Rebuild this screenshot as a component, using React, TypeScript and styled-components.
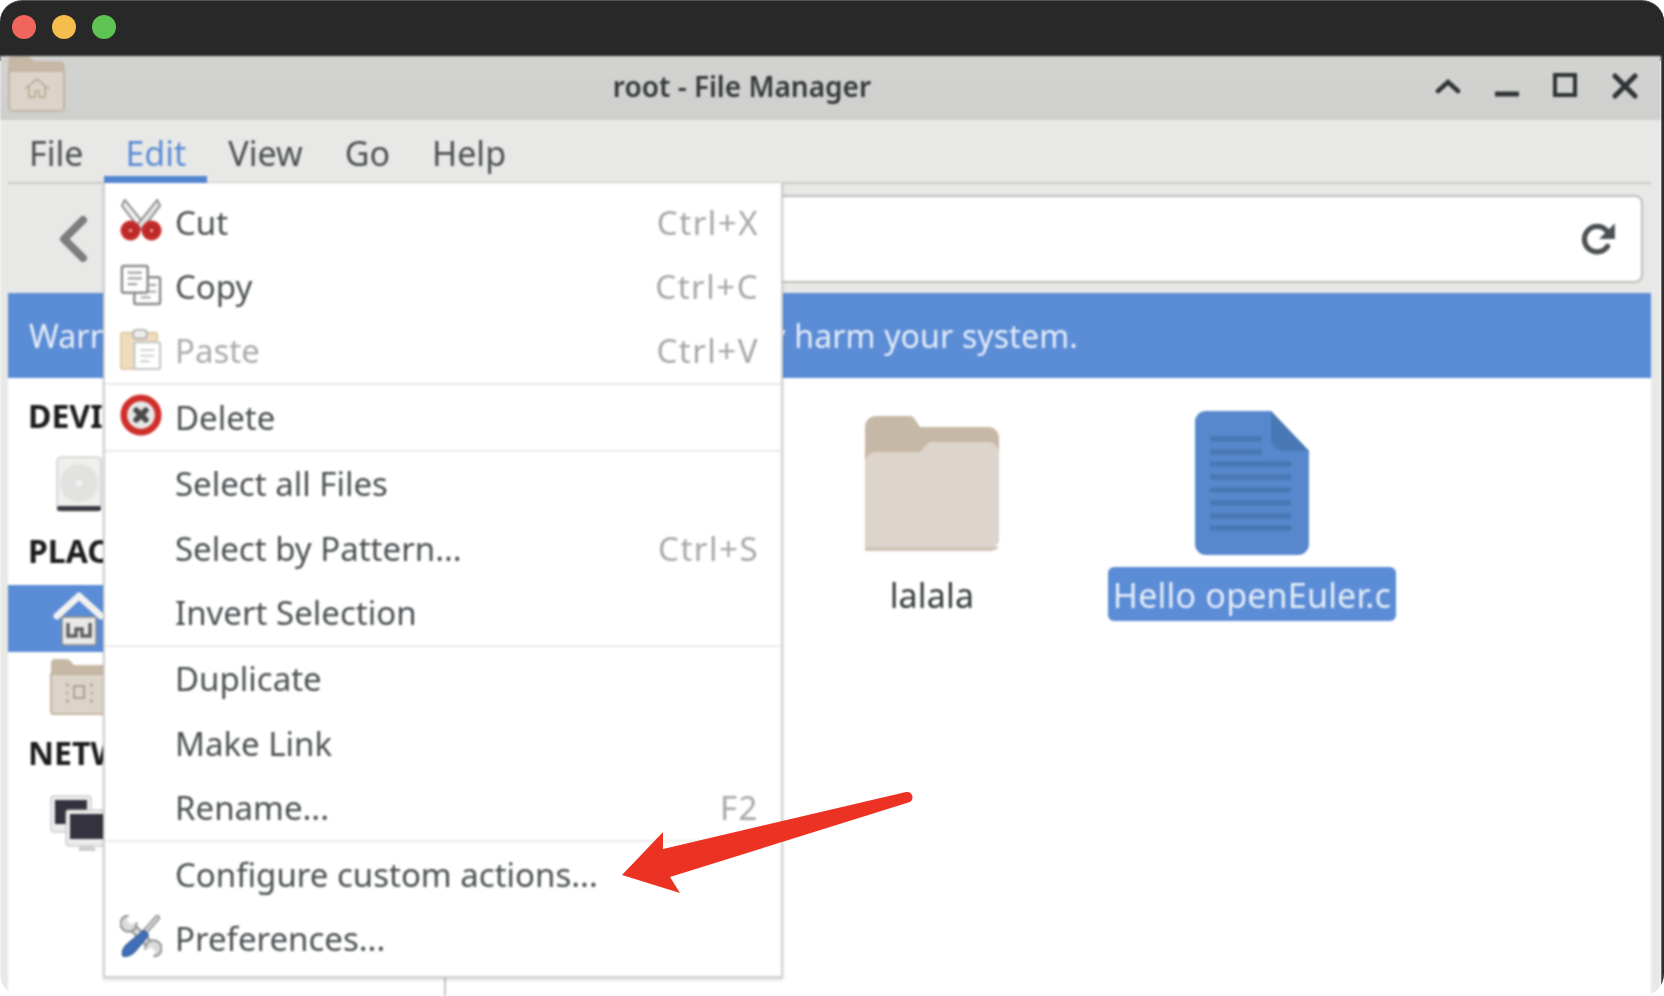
import styled, { createGlobalStyle } from 'styled-components';

const GlobalStyle = createGlobalStyle`
  html, body {
    margin: 0;
    padding: 0;
    width: 1664px;
    height: 996px;
    overflow: hidden;
    background: #ffffff;
  }

  body {
    font-family: "Noto Sans", "Open Sans", sans-serif;
  }
`;

const MENU_TITLES = ['File', 'Edit', 'View', 'Go', 'Help'];

const ICON_TYPE = {
  cut: <ScissorsIcon />,
  copy: <CopyIcon />,
  paste: <PasteIcon />,
  delete: <DeleteIcon />,
  prefs: <ToolsIcon />,
};

const MENU_GROUPS = [
  [
    { label: 'Cut', hint: 'Ctrl+X', icon: 'cut' },
    { label: 'Copy', hint: 'Ctrl+C', icon: 'copy' },
    { label: 'Paste', hint: 'Ctrl+V', icon: 'paste', disabled: true },
  ],
  [{ label: 'Delete', icon: 'delete' }],
  [
    { label: 'Select all Files' },
    { label: 'Select by Pattern...', hint: 'Ctrl+S' },
    { label: 'Invert Selection' },
  ],
  [{ label: 'Duplicate' }, { label: 'Make Link' }, { label: 'Rename...', hint: 'F2' }],
  [{ label: 'Configure custom actions...' }, { label: 'Preferences...', icon: 'prefs' }],
];

function HomeFolderIcon() {
  return (
    <svg width="58" height="56" viewBox="0 0 58 56">
      <path d="M1 12V5a4 4 0 0 1 4-4h14a4 4 0 0 1 3 1.5L26 6h26a4 4 0 0 1 4 4v12H1z" fill="#c7b8a5" stroke="#bdae9b" />
      <path d="M1 15h55v36a4 4 0 0 1-4 4H5a4 4 0 0 1-4-4z" fill="#ddd4c9" stroke="#c2b4a2" strokeWidth="2" />
      <path d="M17 33l12-10 12 10M21 30v11h6v-6h4v6h6V30" fill="none" stroke="#bfb09d" strokeWidth="2" />
    </svg>
  );
}

function BackIcon() {
  return (
    <svg width="32" height="48" viewBox="0 0 32 48">
      <path d="M25 5L6 24l19 19" fill="none" stroke="#7b7d7e" strokeWidth="8" strokeLinecap="round" strokeLinejoin="round" />
    </svg>
  );
}

function RefreshIcon() {
  return (
    <svg width="38" height="38" viewBox="0 0 36 36">
      <path d="M27 25a12 12 0 1 1-1-15" fill="none" stroke="#4c5052" strokeWidth="5" strokeLinecap="round" />
      <path d="M34 3v15H19z" fill="#4c5052" />
    </svg>
  );
}

function ScissorsIcon() {
  return (
    <svg viewBox="0 0 44 44">
      <path d="M5 1l21 26-5 5L2 7z" fill="#f0f0f0" stroke="#8f8f8f" strokeWidth="2" />
      <path d="M39 1L18 27l5 5L42 7z" fill="#e4e4e4" stroke="#8f8f8f" strokeWidth="2" />
      <circle cx="11" cy="33" r="10.5" fill="#c62c2a" />
      <circle cx="33" cy="33" r="10.5" fill="#c62c2a" />
      <circle cx="11" cy="33" r="5" fill="none" stroke="#a52a28" strokeWidth="1.5" />
      <circle cx="33" cy="33" r="5" fill="none" stroke="#a52a28" strokeWidth="1.5" />
      <circle cx="11" cy="33" r="1.6" fill="#e8b0ae" />
      <circle cx="33" cy="33" r="1.6" fill="#e8b0ae" />
    </svg>
  );
}

function CopyIcon() {
  return (
    <svg viewBox="0 0 44 44">
      <rect x="15" y="14" width="27" height="28" rx="2" fill="#fff" stroke="#8c8c8c" strokeWidth="2.6" />
      <path d="M30 22h8M22 29h16M22 35h10" stroke="#aeaeae" strokeWidth="2.4" />
      <rect x="2" y="2" width="27" height="28" rx="2" fill="#fff" stroke="#8c8c8c" strokeWidth="2.6" />
      <path d="M8 9h15M8 15h15M8 21h10" stroke="#a4a4a4" strokeWidth="2.4" />
    </svg>
  );
}

function PasteIcon() {
  return (
    <svg viewBox="0 0 44 44">
      <rect x="1" y="5" width="38" height="38" rx="2.5" fill="#eedcbc" stroke="#dfcba8" strokeWidth="2" />
      <rect x="14" y="2" width="14" height="9" rx="3" fill="#eee" stroke="#b4b4b4" strokeWidth="2" />
      <rect x="15" y="15" width="27" height="28" rx="2" fill="#fff" stroke="#c4c4c4" strokeWidth="2.2" />
      <path d="M21 23h15M21 29h15M21 35h10" stroke="#d2d2d2" strokeWidth="2.2" />
    </svg>
  );
}

function DeleteIcon() {
  return (
    <svg viewBox="0 0 44 44">
      <circle cx="22" cy="22" r="18" fill="#e6e6e6" stroke="#cf2f2b" strokeWidth="7" />
      <path d="M17 17l10 10M27 17L17 27" stroke="#4a4a4a" strokeWidth="6" strokeLinecap="round" />
    </svg>
  );
}

function ToolsIcon() {
  return (
    <svg viewBox="0 0 44 44">
      {/* wrench, open jaw at both ends */}
      <path d="M10 10l26 26" stroke="#8f8f8f" strokeWidth="9" />
      <path d="M10 10l26 26" stroke="#dcdcdc" strokeWidth="5" />
      <circle cx="9" cy="9" r="8.5" fill="#dcdcdc" stroke="#8f8f8f" strokeWidth="2" />
      <path d="M10 -1L7 6l4 4 8-3-3-8z" fill="#fff" />
      <circle cx="35" cy="35" r="8.5" fill="#dcdcdc" stroke="#8f8f8f" strokeWidth="2" />
      <path d="M34 45l3-7-4-4-8 3 3 8z" fill="#fff" />
      {/* screwdriver */}
      <path d="M39 3L24 20" stroke="#8f8f8f" strokeWidth="6" strokeLinecap="round" />
      <path d="M39 3L24 20" stroke="#d4d4d4" strokeWidth="3" strokeLinecap="round" />
      <path d="M25 16l5 5-14 17c-3 4-9 6-13 5-2-4 1-10 5-13z" fill="#3f6fb5" stroke="#2f5793" strokeWidth="1.2" />
    </svg>
  );
}

function DiskIcon() {
  return (
    <svg width="46" height="56" viewBox="0 0 46 56">
      <rect x="1" y="1" width="44" height="54" rx="4" fill="#efefed" stroke="#bdbdbb" />
      <circle cx="23" cy="27" r="19" fill="#e2e2e0" />
      <circle cx="23" cy="27" r="3" fill="#f4f4f4" />
      <rect x="1" y="50" width="44" height="5" rx="2" fill="#3a3a44" />
    </svg>
  );
}

function HomeIcon() {
  return (
    <svg width="52" height="56" viewBox="0 0 52 56">
      <path d="M9 26h34v26a2 2 0 0 1-2 2H11a2 2 0 0 1-2-2z" fill="#e9e9e7" stroke="#8a8a8a" strokeWidth="1.5" />
      <path d="M15 32v13h8v-7h6v7h8V32" fill="none" stroke="#5f6062" strokeWidth="3.5" />
      <path d="M4 25L26 5l22 20" fill="none" stroke="#f2f2f0" strokeWidth="7" strokeLinecap="round" strokeLinejoin="round" />
    </svg>
  );
}

function DesktopFolderIcon() {
  return (
    <svg width="58" height="58" viewBox="0 0 58 58">
      <path d="M1 14V6a4 4 0 0 1 4-4h12a4 4 0 0 1 3 1.5L24 8h30a4 4 0 0 1 4 4v10H1z" fill="#c7b8a5" />
      <path d="M1 17h57v37a3 3 0 0 1-3 3H4a3 3 0 0 1-3-3z" fill="#ddd4c9" stroke="#c2b4a2" strokeWidth="2" />
      <path d="M24 29h10v12H24z" fill="none" stroke="#b0a08c" strokeWidth="2" />
      <path d="M16 28h3M40 28h3M16 44h3M40 44h3M16 36h2M41 36h2" stroke="#b0a08c" strokeWidth="2.5" />
    </svg>
  );
}

function NetworkIcon() {
  return (
    <svg width="58" height="60" viewBox="0 -4 58 60">
      <rect x="1" y="1" width="40" height="36" rx="2" fill="#ececec" stroke="#bdbdbd" />
      <rect x="5" y="5" width="32" height="24" fill="#34323f" />
      <rect x="16" y="15" width="42" height="36" rx="2" fill="#ececec" stroke="#bdbdbd" />
      <rect x="20" y="19" width="38" height="25" fill="#34323f" />
      <path d="M30 51h14l2 5H28z" fill="#cfcfcf" />
    </svg>
  );
}

function FolderIcon() {
  return (
    <svg width="136" height="136" viewBox="0 0 136 136">
      <path d="M1 48V12A11 11 0 0 1 12 1h34c2 0 3 1 4 2l6 9h68a11 11 0 0 1 11 11v25z" fill="#c6b8a6" />
      <path d="M1 135V48a11 11 0 0 1 11-11h42c2 0 3-1 4-2l5-6c1-1 3-2 5-2h56a11 11 0 0 1 11 11v86a11 11 0 0 1-11 11z" fill="#ddd4cb" />
      <path d="M1 132h134c-1 2-5 4-11 4H1z" fill="#d0c5b8" />
    </svg>
  );
}

function DocumentIcon() {
  return (
    <svg width="116" height="146" viewBox="0 0 116 146">
      <path d="M12 1h65l38 40v93a11 11 0 0 1-11 11H12A11 11 0 0 1 1 134V12A11 11 0 0 1 12 1z" fill="#5788cd" />
      <path d="M77 1l38 40H90a13 13 0 0 1-13-13z" fill="#4978b5" />
      <path d="M16 29h52M16 42h52M16 54h81M16 67h81M16 80h81M16 93h81M16 106h81M16 118h81" stroke="#4978b5" strokeWidth="5.5" />
    </svg>
  );
}

export default function App() {
  return (
    <>
      <GlobalStyle />
      <Frame>
        <TrafficLights>
          <Light color="#f1665c" />
          <Light color="#f5bd4b" />
          <Light color="#5ec454" />
        </TrafficLights>
        <Window>
          <HeaderBar>
            <AppIcon>
              <HomeFolderIcon />
            </AppIcon>
            <WindowTitle>root - File Manager</WindowTitle>
            <WindowButtons>
              <svg width="26" height="20" viewBox="0 0 26 20">
                <path d="M3 15L13 6l10 9" fill="none" stroke="#2f3436" strokeWidth="4.5" strokeLinecap="round" />
              </svg>
              <svg width="26" height="26" viewBox="0 0 26 26">
                <path d="M1 21h24" stroke="#2f3436" strokeWidth="5" />
              </svg>
              <svg width="26" height="26" viewBox="0 0 26 26">
                <rect x="2" y="2" width="20" height="20" fill="none" stroke="#2f3436" strokeWidth="4" />
              </svg>
              <svg width="26" height="26" viewBox="0 0 26 26">
                <path d="M3 3l20 20M23 3L3 23" stroke="#2f3436" strokeWidth="5" strokeLinecap="round" />
              </svg>
            </WindowButtons>
          </HeaderBar>

          <MenuBar>
            {MENU_TITLES.map((title) => (
              <MenuTitle key={title} active={title === 'Edit'}>
                {title}
              </MenuTitle>
            ))}
          </MenuBar>

          <Toolbar>
            <BackIcon />
            <LocationBox>
              <RefreshIcon />
            </LocationBox>
          </Toolbar>

          <WarningBar>Warning: you are using the root account. You may harm your system.</WarningBar>

          <Content>
            <Sidebar>
              <SideHeading>DEVICES</SideHeading>
              <SideRow>
                <DiskIcon />
              </SideRow>
              <SideHeading>PLACES</SideHeading>
              <SideRow selected>
                <HomeIcon />
              </SideRow>
              <SideRow>
                <DesktopFolderIcon />
              </SideRow>
              <SideHeading>NETWORK</SideHeading>
              <SideRow>
                <NetworkIcon />
              </SideRow>
            </Sidebar>
            <IconView>
              <FileItem>
                <FileIconSlot>
                  <FolderIcon />
                </FileIconSlot>
                <FileLabel>lalala</FileLabel>
              </FileItem>
              <FileItem>
                <FileIconSlot>
                  <DocumentIcon />
                </FileIconSlot>
                <FileLabel selected>Hello openEuler.c</FileLabel>
              </FileItem>
            </IconView>
          </Content>

          <EditMenu>
            {MENU_GROUPS.map((group, index) => (
              <MenuGroup key={index}>
                {group.map((item) => (
                  <MenuRow key={item.label} disabled={item.disabled}>
                    <MenuIcon>{item.icon && ICON_TYPE[item.icon]}</MenuIcon>
                    <MenuLabel>{item.label}</MenuLabel>
                    {item.hint && <MenuHint>{item.hint}</MenuHint>}
                  </MenuRow>
                ))}
              </MenuGroup>
            ))}
          </EditMenu>
        </Window>
        <Arrow viewBox="0 0 300 120" width="300" height="120">
          <path d="M2 87L43 44 43 61 286 4a5.5 5.5 0 0 1 4 10L50 89 60 105z" fill="#ec3323" />
        </Arrow>
      </Frame>
    </>
  );
}

const Frame = styled.div`
  position: relative;
  display: flex;
  flex-direction: column;

  width: 1664px;
  height: 996px;

  background: linear-gradient(#282828 60px, transparent 60px),
    linear-gradient(to right, #ffffff 1661px, #282828 1661px);
  border-top: 1px solid #555;
  border-radius: 22px;
  box-sizing: border-box;
  overflow: hidden;
`;

const TrafficLights = styled.div`
  display: flex;
  align-items: center;
  gap: 16px;

  height: 55px;
  padding: 0 0 4px 12px;
  box-sizing: border-box;
  flex-shrink: 0;
`;

const Light = styled.span<{ color: string }>`
  width: 24px;
  height: 24px;

  background: ${(props) => props.color};
  border-radius: 50%;
`;

const Window = styled.div`
  position: relative;
  display: flex;
  flex-direction: column;
  flex: 1;

  width: 1661px;
  min-height: 0;

  background: #e8e8e6;
  filter: blur(0.8px);
`;

const HeaderBar = styled.div`
  display: flex;
  align-items: flex-start;

  height: 64px;
  padding: 0 0 0 8px;
  box-sizing: border-box;
  flex-shrink: 0;

  background: linear-gradient(#d3d3d1, #cfcfcd);
`;

const AppIcon = styled.div`
  height: 56px;
  width: 56px;
`;

const WindowTitle = styled.div`
  width: 1356px;
  padding-top: 10px;

  font-size: 28px;
  line-height: 40px;
  font-weight: 600;
  color: #33383a;
  text-align: center;
`;

const WindowButtons = styled.div`
  display: flex;
  align-items: center;
  gap: 33px;

  height: 60px;
  margin-left: 15px;
`;

const MenuBar = styled.div`
  display: flex;

  height: 64px;
  margin: 0 10px 0 8px;
  box-sizing: border-box;
  flex-shrink: 0;

  border-bottom: 2px solid #c9c9c7;
`;

const MenuTitle = styled.div<{ active?: boolean }>`
  position: relative;
  height: 64px;
  padding: 0 21px;

  font-size: 34px;
  line-height: 66px;
  color: ${(props) => (props.active ? '#5b8dd6' : '#4a4f51')};
  box-sizing: border-box;
  border-bottom: 8px solid ${(props) => (props.active ? '#5285d0' : 'transparent')};
`;

const Toolbar = styled.div`
  display: flex;
  align-items: center;

  height: 109px;
  padding: 0 18px 0 58px;
  box-sizing: border-box;
  flex-shrink: 0;
`;

const LocationBox = styled.div`
  display: flex;
  align-items: center;
  justify-content: flex-end;
  flex: 1;

  height: 88px;
  margin: 0 0 0 20px;
  padding-right: 24px;
  box-sizing: border-box;

  background: #ffffff;
  border: 2px solid #bdbdbb;
  border-radius: 8px;
`;

const WarningBar = styled.div`
  height: 85px;
  margin: 0 10px 0 8px;
  padding-left: 21px;
  box-sizing: border-box;
  flex-shrink: 0;

  background: #5b8cd6;
  font-size: 32px;
  line-height: 86px;
  letter-spacing: 0.15px;
  color: #e6eef9;
  white-space: nowrap;
`;

const Content = styled.div`
  display: flex;
  flex: 1;

  min-height: 0;
  margin: 0 10px 0 8px;

  background: #ffffff;
`;

const Sidebar = styled.div`
  display: flex;
  flex-direction: column;

  width: 438px;
  padding-top: 4px;
  box-sizing: border-box;
  flex-shrink: 0;

  border-right: 2px solid #c4c4c2;
`;

const SideHeading = styled.div`
  height: 65px;
  margin-top: 3px;
  padding-left: 20px;

  font-size: 32px;
  line-height: 62px;
  font-weight: 700;
  color: #1c1c1c;
`;

const SideRow = styled.div<{ selected?: boolean }>`
  display: flex;
  align-items: center;
  justify-content: center;

  flex-shrink: 0;
  width: 58px;
  height: 67px;
  padding: 0 338px 0 42px;

  background: ${(props) => (props.selected ? '#5b8cd6' : 'transparent')};
`;

const IconView = styled.div`
  display: flex;

  padding: 32px 0 0 326px;
`;

const FileItem = styled.div`
  display: flex;
  flex-direction: column;
  align-items: center;

  width: 320px;
`;

const FileIconSlot = styled.div`
  display: flex;
  align-items: center;
  justify-content: center;

  height: 146px;
`;

const FileLabel = styled.div<{ selected?: boolean }>`
  height: 54px;
  margin-top: 11px;
  padding: 0 5px;

  font-size: 34px;
  line-height: 56px;
  letter-spacing: 0.2px;
  white-space: nowrap;
  color: ${(props) => (props.selected ? '#e6eef9' : '#33383a')};
  background: ${(props) => (props.selected ? '#5b8cd6' : 'transparent')};
  border-radius: 6px;
`;

const EditMenu = styled.div`
  position: absolute;
  top: 127px;
  left: 103px;

  width: 680px;
  padding: 7px 0 5px;
  box-sizing: border-box;

  background: #ffffff;
  border: 2px solid #d0d0ce;
  border-top: 0;
  box-shadow: 0 2px 3px rgba(0, 0, 0, 0.15);
`;

const MenuGroup = styled.div`
  & + & {
    border-top: 2px solid #e9e9e7;
  }
`;

const MenuRow = styled.div<{ disabled?: boolean }>`
  display: flex;
  align-items: center;

  height: 64.4px;
  padding: 0 22px 0 15px;
  color: ${(props) => (props.disabled ? '#a9abac' : '#4a4f51')};
`;

const MenuIcon = styled.span`
  display: flex;

  width: 42px;
  height: 42px;
  margin: 0 13px 4px 0;

  svg {
    width: 42px;
    height: 42px;
  }
`;

const MenuLabel = styled.span`
  flex: 1;

  font-size: 33px;
  white-space: nowrap;
`;

const MenuHint = styled.span`
  font-size: 33px;
  letter-spacing: 1.5px;
  color: #a4a6a7;
`;

const Arrow = styled.svg`
  position: absolute;
  top: 787px;
  left: 620px;
`;
